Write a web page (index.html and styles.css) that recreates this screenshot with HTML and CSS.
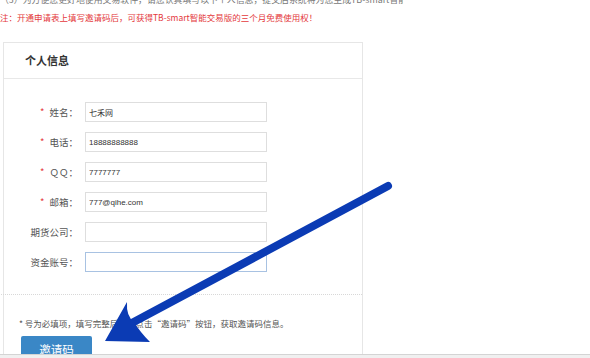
FILE: index.html
```html
<!DOCTYPE html>
<html lang="zh-CN">
<head>
    <meta charset="UTF-8">
    <title>个人信息</title>
    <link rel="stylesheet" href="styles.css">
</head>
<body>

<div class="page">
    <p class="intro">（3）为方便您更好地使用交易软件，请您认真填写以下个人信息，提交后系统将为您生成TB-smart智能交易版邀请码。</p>
    <p class="notice">注：开通申请表上填写邀请码后，可获得TB-smart智能交易版的三个月免费使用权！</p>

    <div class="card">
        <div class="card-head">个人信息</div>
        <form class="info-form">
            <div class="row">
                <label><span class="req">*</span>姓名：</label>
                <input type="text" value="七禾网">
            </div>
            <div class="row">
                <label><span class="req">*</span>电话：</label>
                <input type="text" value="18888888888">
            </div>
            <div class="row">
                <label><span class="req">*</span>ＱＱ：</label>
                <input type="text" value="7777777">
            </div>
            <div class="row">
                <label><span class="req">*</span>邮箱：</label>
                <input type="text" value="777@qihe.com">
            </div>
            <div class="row">
                <label>期货公司：</label>
                <input type="text" value="">
            </div>
            <div class="row">
                <label>资金账号：</label>
                <input type="text" value="" class="focus">
            </div>
        </form>
        <div class="card-foot">
            <p class="tip">* 号为必填项，填写完整后，可点击“邀请码”按钮，获取邀请码信息。</p>
            <button type="button" class="btn">邀请码</button>
        </div>
    </div>
</div>

<div class="edge"></div>

<!-- annotation arrow drawn over the screenshot -->
<svg class="arrow" width="590" height="358" viewBox="0 0 590 358">
    <line x1="388" y1="186" x2="130" y2="324" stroke="#0b3bb4" stroke-width="8" stroke-linecap="round"/>
    <path d="M105 341 L127 302 Q126 316 134 322 Q140 332 150 342 Z" fill="#0b3bb4"/>
</svg>

</body>
</html>
```

FILE: styles.css
```css
body {
    margin: 0;
    background: #fff;
    font-family: "Noto Sans CJK SC", "Liberation Sans", sans-serif;
    overflow: hidden;
    height: 358px;
    position: relative;
}
.page {
    padding: 0;
}
.intro {
    margin: -6px 0 0;
    width: 403px;
    white-space: nowrap;
    overflow: hidden;
    font-size: 8.9px;
    line-height: 12px;
    color: #777;
}
.notice {
    margin: 5px 0 0;
    font-size: 8.5px;
    line-height: 12px;
    color: #e4393c;
}
.card {
    margin: 19px 0 0 3px;
    width: 358px;
    height: 340px;
    border: 1px solid #e6e6e6;
}
.card-head {
    height: 35px;
    line-height: 35px;
    padding-left: 21px;
    font-size: 11px;
    font-weight: bold;
    color: #333;
    border-bottom: 1px solid #e8e8e8;
}
.info-form {
    padding: 23px 0 0;
    margin: 0;
}
.row {
    display: flex;
    align-items: center;
    height: 20px;
    margin-bottom: 10px;
}
.row label {
    width: 74px;
    text-align: right;
    font-size: 9.5px;
    color: #555;
}
.req {
    color: #e4393c;
    margin-right: 5px;
}
.row input {
    margin-left: 7px;
    width: 182px;
    height: 20px;
    box-sizing: border-box;
    border: 1px solid #dedede;
    padding: 0 3px;
    font-family: "Liberation Sans", "Noto Sans CJK SC", sans-serif;
    font-size: 8px;
    color: #333;
    outline: none;
}
.row input.focus {
    border-color: #a8c2e2;
}
.card-foot {
    margin-top: 22px;
    margin-left: -3px;
    width: 361px;
    border-top: 1px dotted #d8d8d8;
    padding: 22px 0 0 18px;
    box-sizing: border-box;
}
.tip {
    margin: 0;
    font-size: 8.5px;
    line-height: 12px;
    color: #555;
}
.btn {
    margin: 7px 0 0 2px;
    width: 71px;
    height: 26px;
    border: none;
    border-radius: 2px;
    background: #3a87c6;
    color: #fff;
    font-family: "Noto Sans CJK SC", sans-serif;
    font-size: 11.5px;
    padding: 0;
}
.edge {
    position: absolute;
    left: 0;
    bottom: 0;
    width: 100%;
    height: 3px;
    background: #f0f0f0;
    border-top: 1px solid #d4d4d4;
}
.arrow {
    position: absolute;
    left: 0;
    top: 0;
    pointer-events: none;
}
```
